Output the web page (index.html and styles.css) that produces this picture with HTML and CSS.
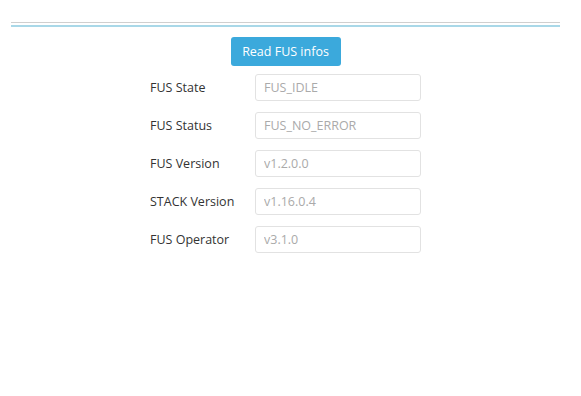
FILE: index.html
```html
<!DOCTYPE html>
<html>
<head>
<meta charset="utf-8">
<link rel="stylesheet" href="styles.css">
</head>
<body>
<div class="page">
  <div class="rule"></div>
  <div class="actions">
    <button class="btn">Read FUS infos</button>
  </div>
  <div class="form">
    <div class="row"><span class="label">FUS State</span><input class="field" value="FUS_IDLE" readonly></div>
    <div class="row"><span class="label">FUS Status</span><input class="field" value="FUS_NO_ERROR" readonly></div>
    <div class="row"><span class="label">FUS Version</span><input class="field" value="v1.2.0.0" readonly></div>
    <div class="row"><span class="label">STACK Version</span><input class="field" value="v1.16.0.4" readonly></div>
    <div class="row"><span class="label">FUS Operator</span><input class="field" value="v3.1.0" readonly></div>
  </div>
</div>
</body>
</html>
```
FILE: styles.css
```css
html, body {
  margin: 0;
  padding: 0;
  background: #ffffff;
  font-family: "Open Sans", "Segoe UI", sans-serif;
  font-size: 12.5px;
  color: #333333;
}
.page {
  margin: 0 21px 0 11px;
  padding-top: 22px;
}
.rule {
  height: 2px;
  border-top: 1px solid #cfcfcf;
  border-bottom: 2px solid #a9d8e8;
  background: #ffffff;
}
.actions {
  display: flex;
  justify-content: center;
  padding-top: 10px;
}
.btn {
  width: 110px;
  height: 29px;
  border: none;
  border-radius: 3px;
  background: #3ba9dc;
  color: #ffffff;
  font-family: inherit;
  font-size: 12.5px;
  padding: 0;
}
.form {
  display: flex;
  flex-direction: column;
  align-items: flex-start;
  gap: 11px;
  padding-top: 8px;
  padding-left: 139px;
}
.row {
  display: flex;
  align-items: center;
  width: 271px;
}
.label {
  width: 105px;
  flex: none;
}
.field {
  box-sizing: border-box;
  width: 166px;
  height: 27px;
  border: 1px solid #e2e2e2;
  border-radius: 3px;
  padding: 0 8px;
  font-family: inherit;
  font-size: 12.5px;
  color: #aaaaaa;
  background: #ffffff;
  outline: none;
}
```
